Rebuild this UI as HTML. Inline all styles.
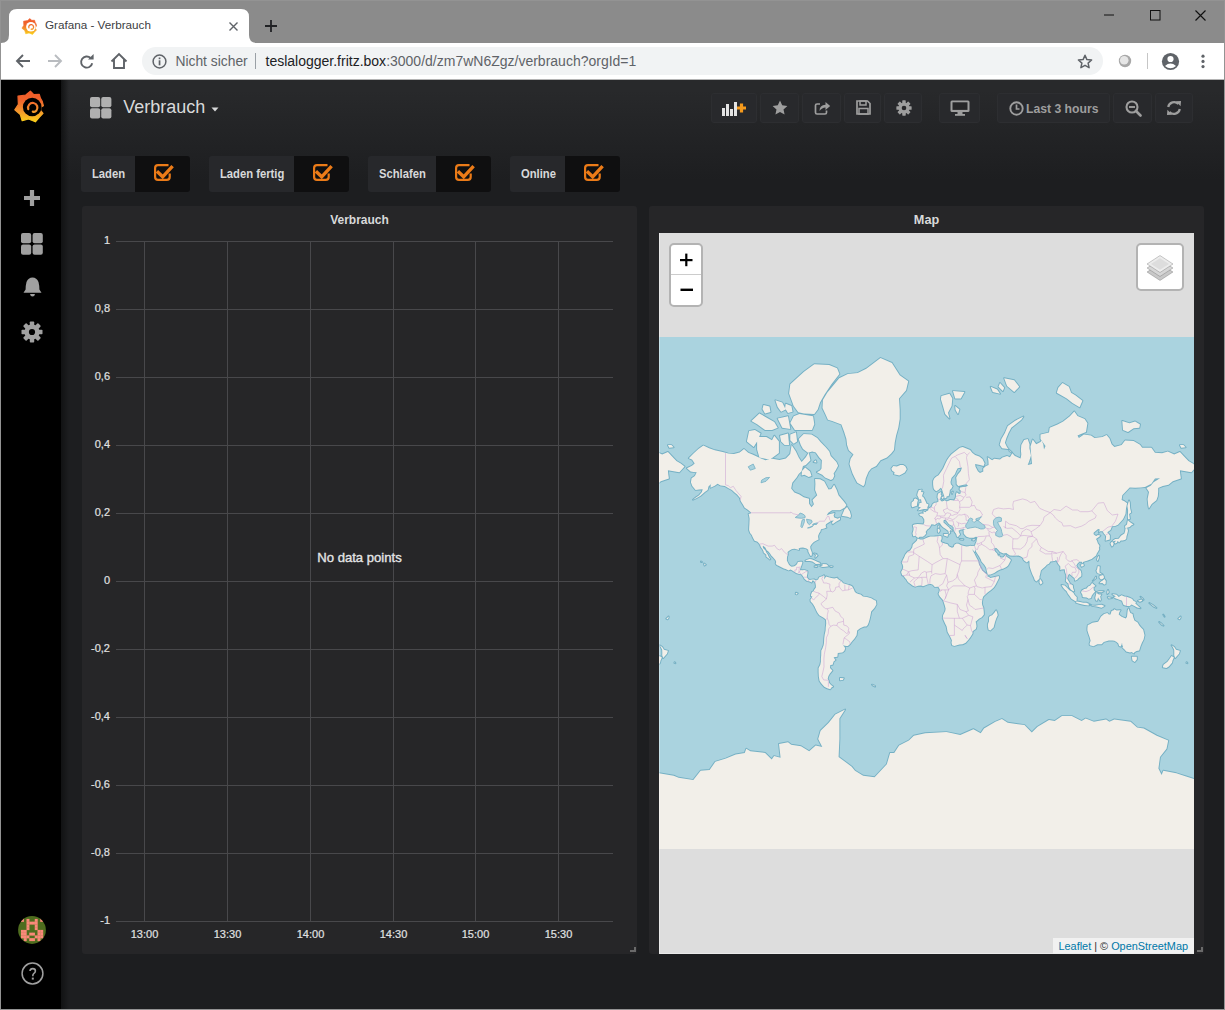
<!DOCTYPE html>
<html><head><meta charset="utf-8">
<style>
*{box-sizing:border-box}
html,body{margin:0;padding:0;width:1225px;height:1010px;overflow:hidden;background:#939393;font-family:"Liberation Sans",sans-serif}
.a{position:absolute}
.t{position:absolute;white-space:nowrap;line-height:1}
#tabstrip{left:1px;top:1px;width:1223px;height:42px;background:#8b8b8b}
#toolbar{left:1px;top:43px;width:1223px;height:37px;background:#fff}
#content{left:1px;top:80px;width:1223px;height:929px;background:linear-gradient(180deg,#28292b 10px,#1d1e20 100px);overflow:hidden}
#side{left:0;top:0;width:60px;height:929px;background:#000}
#sideshadow{left:60px;top:0;width:8px;height:929px;background:linear-gradient(to right,#111213,rgba(29,30,32,0))}
.btn{position:absolute;top:13px;height:30px;background:#28292c;border-radius:3px;border:1px solid #2d2e31}
.lbl{position:absolute;top:76px;height:35.6px;background:#27282b;border-radius:3px 0 0 3px;color:#d8d9da;font-weight:bold;font-size:13px}
.sx{transform:scaleX(0.865);transform-origin:0 0}
.chk{position:absolute;top:76px;height:35.6px;background:#0f0f10;border-radius:0 3px 3px 0}
.panel{position:absolute;top:126px;height:748px;background:#262628;border-radius:3px}
.yl{position:absolute;right:0;width:40px;text-align:right;font-size:11px;color:#d8d9da;line-height:1}
.xl{position:absolute;width:40px;text-align:center;font-size:11px;color:#d8d9da;line-height:1;top:728px}
</style></head><body>
<div id="tabstrip" class="a">
  <svg class="a" style="left:-1px;top:-1px" width="270" height="43">
    <path d="M1,43 Q9,43 9,35 L9,17 Q9,9 17,9 L241,9 Q249,9 249,17 L249,35 Q249,43 257,43 Z" fill="#fff"/>
  </svg>
  <svg class="a" style="left:19.5px;top:16.5px" width="17" height="17" viewBox="4 4 31 33">
    <defs><linearGradient id="gfav" x1="0" y1="5" x2="0" y2="36" gradientUnits="userSpaceOnUse"><stop offset="0" stop-color="#f05a28"/><stop offset="0.35" stop-color="#f0642c"/><stop offset="0.65" stop-color="#f4962c"/><stop offset="1" stop-color="#fbd019"/></linearGradient></defs>
    <path d="M20.4,5.1 L23.8,8.6 L29.3,8.3 L30.4,12.2 Q33,15.5 33.4,19.8 L30.8,21.2 L30.6,24.3 L33,27.4 L29.2,31.4 L25.4,35.8 L18.6,33 L12.2,34.7 L10.3,28.5 L4.8,23.8 L8.4,18.2 L8,10.2 L15.8,9 Z" fill="url(#gfav)" stroke="url(#gfav)" stroke-width="1.2" stroke-linejoin="round"/>
    <circle cx="22.2" cy="21" r="9.3" fill="#fff"/>
    <path d="M18.3,23.2 A4.7,4.7 0 1 1 26.4,24.6 Q25,26.3 22.8,25.6" fill="none" stroke="url(#gfav)" stroke-width="2.6" stroke-linecap="round"/>
  </svg>
  <div class="t" style="left:44px;top:18px;font-size:11.7px;color:#3c4043">Grafana - Verbrauch</div>
  <svg class="a" style="left:228px;top:21px" width="9" height="9"><path d="M0.5,0.5 L8.5,8.5 M8.5,0.5 L0.5,8.5" stroke="#5f6368" stroke-width="1.4"/></svg>
  <svg class="a" style="left:264px;top:19px" width="12" height="12"><path d="M6,0 V12 M0,6 H12" stroke="#202124" stroke-width="1.8"/></svg>
  <svg class="a" style="left:1103px;top:13px" width="11" height="2"><path d="M0,1 H10" stroke="#111" stroke-width="1"/></svg>
  <svg class="a" style="left:1149px;top:9px" width="11" height="11"><rect x="0.5" y="0.5" width="9.5" height="9.5" fill="none" stroke="#111" stroke-width="1"/></svg>
  <svg class="a" style="left:1194px;top:9px" width="11" height="11"><path d="M0.5,0.5 L10.5,10.5 M10.5,0.5 L0.5,10.5" stroke="#111" stroke-width="1.15"/></svg>
</div>
<div id="toolbar" class="a">
  <div class="a" style="left:0;top:36px;width:1223px;height:1px;background:#b4b4b4"></div>
  <!-- back -->
  <svg class="a" style="left:14.3px;top:10px" width="16" height="16" viewBox="0 0 16 16"><path d="M15,8 H2.5 M8,2 L2,8 L8,14" fill="none" stroke="#5f6368" stroke-width="1.9"/></svg>
  <svg class="a" style="left:46.2px;top:10px" width="16" height="16" viewBox="0 0 16 16"><path d="M1,8 H13.5 M8,2 L14,8 L8,14" fill="none" stroke="#b9bcc0" stroke-width="1.9"/></svg>
  <svg class="a" style="left:78px;top:10.6px" width="16" height="16" viewBox="0 0 16 16"><path d="M13.2,9.2 A5.6,5.6 0 1 1 11.6,4" fill="none" stroke="#5f6368" stroke-width="1.9"/><path d="M9,5.6 L14.6,5.6 L14.6,0 Z" fill="#5f6368"/></svg>
  <svg class="a" style="left:109px;top:9px" width="18" height="18" viewBox="0 0 18 18"><path d="M1.5,9.5 L9,2 L16.5,9.5 M4,7.5 V16 H14 V7.5" fill="none" stroke="#5f6368" stroke-width="1.9" stroke-linejoin="miter"/></svg>
  <div class="a" style="left:141px;top:4px;width:961px;height:28px;border-radius:14px;background:#f1f3f4"></div>
  <svg class="a" style="left:150.7px;top:10.6px" width="15" height="15" viewBox="0 0 15 15"><circle cx="7.5" cy="7.5" r="6.4" fill="none" stroke="#5f6368" stroke-width="1.5"/><rect x="6.7" y="6.3" width="1.7" height="5" fill="#5f6368"/><rect x="6.7" y="3.5" width="1.7" height="1.7" fill="#5f6368"/></svg>
  <div class="t" style="left:174.4px;top:12px;font-size:13.85px;color:#5f6368">Nicht sicher</div>
  <div class="a" style="left:254.4px;top:10px;width:1px;height:16px;background:#9aa0a6"></div>
  <div class="t" style="left:264.5px;top:10.6px;font-size:14px;color:#202124">teslalogger.fritz.box<span style="color:#5f6368">:3000/d/zm7wN6Zgz/verbrauch?orgId=1</span></div>
  <svg class="a" style="left:1076.3px;top:10.5px" width="16" height="16" viewBox="0 0 16 16"><path d="M8,1.3 L9.9,5.6 L14.6,6 L11.1,9.1 L12.1,13.7 L8,11.3 L3.9,13.7 L4.9,9.1 L1.4,6 L6.1,5.6 Z" fill="none" stroke="#5f6368" stroke-width="1.5" stroke-linejoin="round"/></svg>
  <svg class="a" style="left:1117px;top:11px" width="14" height="14" viewBox="0 0 14 14"><circle cx="7" cy="7" r="6.2" fill="#a8a8a8"/><circle cx="6.2" cy="6.2" r="4.3" fill="#e6e6e6"/></svg>
  <div class="a" style="left:1146px;top:10px;width:1px;height:16px;background:#c6c6c6"></div>
  <svg class="a" style="left:1159.5px;top:8.5px" width="19" height="19" viewBox="0 0 19 19"><circle cx="9.5" cy="9.5" r="8.6" fill="#5f6368"/><circle cx="9.5" cy="7" r="3.1" fill="#fff"/><path d="M4,14 Q9.5,9.2 15,14 Q9.5,18.5 4,14 Z" fill="#fff"/></svg>
  <svg class="a" style="left:1198.6px;top:11px" width="6" height="15" viewBox="0 0 6 15"><circle cx="3" cy="2.2" r="1.6" fill="#5f6368"/><circle cx="3" cy="7.4" r="1.6" fill="#5f6368"/><circle cx="3" cy="12.6" r="1.6" fill="#5f6368"/></svg>
</div>
<div id="content" class="a">
  <div id="sideshadow" class="a"></div>
  <div id="side" class="a">
    <svg class="a" style="left:9px;top:6px" width="40" height="40" viewBox="0 0 40 40">
      <defs><linearGradient id="glogo" x1="0" y1="5" x2="0" y2="36" gradientUnits="userSpaceOnUse"><stop offset="0" stop-color="#f05a28"/><stop offset="0.3" stop-color="#f0642c"/><stop offset="0.65" stop-color="#f4962c"/><stop offset="1" stop-color="#fbd019"/></linearGradient></defs>
      <path d="M20.4,5.1 L23.8,8.6 L29.3,8.3 L30.4,12.2 Q33,15.5 33.4,19.8 L30.8,21.2 L30.6,24.3 L33,27.4 L29.2,31.4 L25.4,35.8 L18.6,33 L12.2,34.7 L10.3,28.5 L4.8,23.8 L8.4,18.2 L8,10.2 L15.8,9 Z" fill="url(#glogo)" stroke="url(#glogo)" stroke-width="1.2" stroke-linejoin="round"/>
      <circle cx="22.2" cy="21" r="9.3" fill="#000"/>
      <path d="M18.3,23.2 A4.7,4.7 0 1 1 26.4,24.6 Q25,26.3 22.8,25.6" fill="none" stroke="url(#glogo)" stroke-width="2.2" stroke-linecap="round"/>
    </svg>
    <svg class="a" style="left:22px;top:109px" width="18" height="18" viewBox="0 0 18 18"><path d="M9,1 V17 M1,9 H17" stroke="#a0a0a0" stroke-width="4.2"/></svg>
    <svg class="a" style="left:20.2px;top:153px" width="22" height="22" viewBox="0 0 22 22"><rect x="0" y="0" width="10.2" height="10.2" rx="2" fill="#a0a0a0"/><rect x="11.6" y="0" width="10.2" height="10.2" rx="2" fill="#a0a0a0"/><rect x="0" y="11.6" width="10.2" height="10.2" rx="2" fill="#a0a0a0"/><rect x="11.6" y="11.6" width="10.2" height="10.2" rx="2" fill="#a0a0a0"/></svg>
    <svg class="a" style="left:22px;top:197px" width="19" height="21" viewBox="0 0 19 21"><path d="M9.5,0.5 Q13.7,0.5 15.5,5 Q16.5,9 16.4,12.5 L18.5,15.8 H0.5 L2.6,12.5 Q2.5,9 3.5,5 Q5.3,0.5 9.5,0.5 Z" fill="#a0a0a0"/><path d="M7,17 H12 Q11.6,19.6 9.5,19.6 Q7.4,19.6 7,17 Z" fill="#a0a0a0"/></svg>
    <svg class="a" style="left:20.3px;top:240.8px" width="22" height="22" viewBox="0 0 22 22"><g fill="#a0a0a0"><circle cx="11" cy="11" r="7.6"/><rect x="8.8" y="0.5" width="4.4" height="21" rx="0.8"/><rect x="8.8" y="0.5" width="4.4" height="21" rx="0.8" transform="rotate(45 11 11)"/><rect x="8.8" y="0.5" width="4.4" height="21" rx="0.8" transform="rotate(90 11 11)"/><rect x="8.8" y="0.5" width="4.4" height="21" rx="0.8" transform="rotate(135 11 11)"/></g><circle cx="11" cy="11" r="3.1" fill="#000"/></svg>
    <svg class="a" style="left:17px;top:836px" width="28" height="28" viewBox="0 0 28 28"><defs><clipPath id="avc"><circle cx="14" cy="14" r="13.9"/></clipPath></defs><g clip-path="url(#avc)"><rect width="28" height="28" fill="#4e6c1e"/><g fill="#f98979"><rect x="3.00" y="2.90" width="2.95" height="2.95"/><rect x="8.50" y="2.90" width="2.95" height="2.95"/><rect x="16.75" y="2.90" width="2.95" height="2.95"/><rect x="22.25" y="2.90" width="2.95" height="2.95"/><rect x="8.50" y="5.65" width="2.95" height="2.95"/><rect x="11.25" y="5.65" width="2.95" height="2.95"/><rect x="14.00" y="5.65" width="2.95" height="2.95"/><rect x="16.75" y="5.65" width="2.95" height="2.95"/><rect x="8.50" y="8.40" width="2.95" height="2.95"/><rect x="16.75" y="8.40" width="2.95" height="2.95"/><rect x="8.50" y="11.15" width="2.95" height="2.95"/><rect x="16.75" y="11.15" width="2.95" height="2.95"/><rect x="3.00" y="13.90" width="2.95" height="2.95"/><rect x="5.75" y="13.90" width="2.95" height="2.95"/><rect x="19.50" y="13.90" width="2.95" height="2.95"/><rect x="22.25" y="13.90" width="2.95" height="2.95"/><rect x="3.00" y="16.65" width="2.95" height="2.95"/><rect x="5.75" y="16.65" width="2.95" height="2.95"/><rect x="11.25" y="16.65" width="2.95" height="2.95"/><rect x="14.00" y="16.65" width="2.95" height="2.95"/><rect x="19.50" y="16.65" width="2.95" height="2.95"/><rect x="22.25" y="16.65" width="2.95" height="2.95"/><rect x="3.00" y="19.40" width="2.95" height="2.95"/><rect x="5.75" y="19.40" width="2.95" height="2.95"/><rect x="8.50" y="19.40" width="2.95" height="2.95"/><rect x="16.75" y="19.40" width="2.95" height="2.95"/><rect x="19.50" y="19.40" width="2.95" height="2.95"/><rect x="22.25" y="19.40" width="2.95" height="2.95"/><rect x="5.75" y="22.15" width="2.95" height="2.95"/><rect x="11.25" y="22.15" width="2.95" height="2.95"/><rect x="14.00" y="22.15" width="2.95" height="2.95"/><rect x="19.50" y="22.15" width="2.95" height="2.95"/></g></g></svg>
    <svg class="a" style="left:19.6px;top:882.4px" width="23" height="23" viewBox="0 0 23 23"><circle cx="11.5" cy="11.5" r="10.4" fill="none" stroke="#a0a0a0" stroke-width="1.5"/><path d="M9,9 Q9.2,6.6 11.8,6.6 Q14.4,6.6 14.4,9 Q14.4,10.6 12.7,11.6 Q11.8,12.2 11.8,14.2" fill="none" stroke="#a0a0a0" stroke-width="1.6"/><rect x="10.8" y="15.6" width="2" height="2" fill="#a0a0a0"/></svg>
  </div>
  <!-- header -->
  <svg class="a" style="left:89px;top:17px" width="22" height="22" viewBox="0 0 22 22"><rect x="0" y="0" width="10.2" height="10.2" rx="2" fill="#b0b0b0"/><rect x="11.2" y="0" width="10.2" height="10.2" rx="2" fill="#b0b0b0"/><rect x="0" y="11.2" width="10.2" height="10.2" rx="2" fill="#b0b0b0"/><rect x="11.2" y="11.2" width="10.2" height="10.2" rx="2" fill="#b0b0b0"/></svg>
  <div class="t" style="left:122.3px;top:17.7px;font-size:18px;color:#d8d9da">Verbrauch</div>
  <svg class="a" style="left:210px;top:26.7px" width="8" height="5"><path d="M0.5,0.5 H7.5 L4,4.5 Z" fill="#d8d9da"/></svg>

  <div class="btn" style="left:710px;width:46px"></div>
  <div class="btn" style="left:759px;width:39px"></div>
  <div class="btn" style="left:801px;width:39px"></div>
  <div class="btn" style="left:843px;width:37px"></div>
  <div class="btn" style="left:883px;width:38px"></div>
  <div class="btn" style="left:938px;width:41px"></div>
  <div class="btn" style="left:996px;width:113px"></div>
  <div class="btn" style="left:1112px;width:39px"></div>
  <div class="btn" style="left:1154px;width:38px"></div>
  <!-- add panel icon -->
  <svg class="a" style="left:721px;top:20px" width="26" height="16" viewBox="0 0 26 16"><g fill="#e3e3e3"><rect x="0" y="8" width="3" height="8"/><rect x="4" y="4" width="3" height="12"/><rect x="8" y="9" width="3" height="7"/><rect x="12" y="2" width="3" height="14"/></g><path d="M15,8 H24 M19.5,3.5 V12.5" stroke="#f59a1c" stroke-width="3.2"/></svg>
  <svg class="a" style="left:771px;top:20px" width="16" height="16" viewBox="0 0 16 16"><path d="M8,0.5 L10.2,5.3 L15.4,5.9 L11.5,9.4 L12.6,14.6 L8,12 L3.4,14.6 L4.5,9.4 L0.6,5.9 L5.8,5.3 Z" fill="#9e9e9e"/></svg>
  <svg class="a" style="left:813px;top:19px" width="17" height="16" viewBox="0 0 17 16"><path d="M6,5 H3 Q1.5,5 1.5,6.5 V13.5 Q1.5,15 3,15 H11 Q12.5,15 12.5,13.5 V11.5" fill="none" stroke="#9e9e9e" stroke-width="1.7"/><path d="M5.5,12 Q5.5,6 11.5,5.8 V3 L16.2,7 L11.5,11 V8.5 Q8,8.5 5.5,12 Z" fill="#9e9e9e"/></svg>
  <svg class="a" style="left:855px;top:20px" width="15" height="15" viewBox="0 0 15 15"><path d="M1,1 H11.5 L14,3.5 V14 H1 Z" fill="none" stroke="#9e9e9e" stroke-width="1.7"/><rect x="4" y="1" width="6" height="4" fill="none" stroke="#9e9e9e" stroke-width="1.5"/><rect x="3" y="8.5" width="9" height="5.5" fill="none" stroke="#9e9e9e" stroke-width="1.5"/></svg>
  <svg class="a" style="left:895px;top:20px" width="16" height="16" viewBox="0 0 22 22"><g fill="#9e9e9e"><circle cx="11" cy="11" r="7.6"/><rect x="8.6" y="0.5" width="4.8" height="21" rx="0.8"/><rect x="8.6" y="0.5" width="4.8" height="21" rx="0.8" transform="rotate(45 11 11)"/><rect x="8.6" y="0.5" width="4.8" height="21" rx="0.8" transform="rotate(90 11 11)"/><rect x="8.6" y="0.5" width="4.8" height="21" rx="0.8" transform="rotate(135 11 11)"/></g><circle cx="11" cy="11" r="3.2" fill="#262628"/></svg>
  <svg class="a" style="left:949px;top:20px" width="20" height="16" viewBox="0 0 20 16"><rect x="0.5" y="0.5" width="19" height="11.5" rx="1.5" fill="#9e9e9e"/><rect x="2.5" y="2.3" width="15" height="7.6" fill="#262628"/><rect x="7.5" y="12" width="5" height="2.4" fill="#9e9e9e"/><rect x="5" y="14" width="10" height="1.8" fill="#9e9e9e"/></svg>
  <svg class="a" style="left:1008px;top:21px" width="15" height="15" viewBox="0 0 15 15"><circle cx="7.5" cy="7.5" r="6.2" fill="none" stroke="#9e9e9e" stroke-width="1.9"/><path d="M7.5,3.5 V8 H10.5" fill="none" stroke="#9e9e9e" stroke-width="1.7"/></svg>
  <div class="t" style="left:1025px;top:22.8px;font-size:12.2px;color:#9e9e9e;font-weight:bold">Last 3 hours</div>
  <svg class="a" style="left:1124px;top:20px" width="17" height="17" viewBox="0 0 17 17"><circle cx="7" cy="7" r="5.5" fill="none" stroke="#9e9e9e" stroke-width="2.1"/><path d="M4,7 H10" stroke="#9e9e9e" stroke-width="1.9"/><path d="M11,11 L15.5,15.5" stroke="#9e9e9e" stroke-width="2.6" stroke-linecap="round"/></svg>
  <svg class="a" style="left:1165px;top:20px" width="16" height="16" viewBox="0 0 16 16"><path d="M2.2,7 A6,6 0 0 1 12.5,4" fill="none" stroke="#9e9e9e" stroke-width="2.2"/><path d="M10,1.2 L15,1 L14.6,6.2 Z" fill="#9e9e9e"/><path d="M13.8,9 A6,6 0 0 1 3.5,12" fill="none" stroke="#9e9e9e" stroke-width="2.2"/><path d="M6,14.8 L1,15 L1.4,9.8 Z" fill="#9e9e9e"/></svg>

  <!-- variables -->
  <div class="lbl" style="left:80px;width:54px"><span class="t sx" style="left:11px;top:10.8px">Laden</span></div>
  <div class="chk" style="left:134px;width:55px"></div>
  <div class="lbl" style="left:208px;width:86px"><span class="t sx" style="left:11px;top:10.8px">Laden fertig</span></div>
  <div class="chk" style="left:293px;width:55px"></div>
  <div class="lbl" style="left:367px;width:69px"><span class="t sx" style="left:11.2px;top:10.8px">Schlafen</span></div>
  <div class="chk" style="left:435px;width:55px"></div>
  <div class="lbl" style="left:509px;width:56px"><span class="t sx" style="left:10.8px;top:10.8px">Online</span></div>
  <div class="chk" style="left:564px;width:55px"></div>
  <svg class="a" style="left:151.5px;top:82px" width="22" height="20" viewBox="-1 -2 22 20"><path d="M14.5,1.1 H4 Q1.1,1.1 1.1,4 V12.9 Q1.1,15.8 4,15.8 H12.8 Q15.7,15.8 15.7,12.9 V9.5" fill="none" stroke="#eb7b18" stroke-width="2.2"/><path d="M2.9,7.3 L8.7,12.8 L18.6,2.2" fill="none" stroke="#eb7b18" stroke-width="3.4"/></svg>
<svg class="a" style="left:310.5px;top:82px" width="22" height="20" viewBox="-1 -2 22 20"><path d="M14.5,1.1 H4 Q1.1,1.1 1.1,4 V12.9 Q1.1,15.8 4,15.8 H12.8 Q15.7,15.8 15.7,12.9 V9.5" fill="none" stroke="#eb7b18" stroke-width="2.2"/><path d="M2.9,7.3 L8.7,12.8 L18.6,2.2" fill="none" stroke="#eb7b18" stroke-width="3.4"/></svg>
<svg class="a" style="left:452.5px;top:82px" width="22" height="20" viewBox="-1 -2 22 20"><path d="M14.5,1.1 H4 Q1.1,1.1 1.1,4 V12.9 Q1.1,15.8 4,15.8 H12.8 Q15.7,15.8 15.7,12.9 V9.5" fill="none" stroke="#eb7b18" stroke-width="2.2"/><path d="M2.9,7.3 L8.7,12.8 L18.6,2.2" fill="none" stroke="#eb7b18" stroke-width="3.4"/></svg>
<svg class="a" style="left:581.5px;top:82px" width="22" height="20" viewBox="-1 -2 22 20"><path d="M14.5,1.1 H4 Q1.1,1.1 1.1,4 V12.9 Q1.1,15.8 4,15.8 H12.8 Q15.7,15.8 15.7,12.9 V9.5" fill="none" stroke="#eb7b18" stroke-width="2.2"/><path d="M2.9,7.3 L8.7,12.8 L18.6,2.2" fill="none" stroke="#eb7b18" stroke-width="3.4"/></svg>

  <!-- chart panel -->
  <div class="panel" style="left:81px;width:555px">
    <div class="t" style="left:0;width:555px;text-align:center;top:7.6px;font-size:12px;font-weight:bold;color:#d8d9da">Verbrauch</div>
    <svg class="a" style="left:0;top:0" width="555" height="748">
<path d="M34,35.5 H531" stroke="#48484b" stroke-width="1"/>
<path d="M34,103.5 H531" stroke="#48484b" stroke-width="1"/>
<path d="M34,171.5 H531" stroke="#48484b" stroke-width="1"/>
<path d="M34,239.5 H531" stroke="#48484b" stroke-width="1"/>
<path d="M34,307.5 H531" stroke="#48484b" stroke-width="1"/>
<path d="M34,375.5 H531" stroke="#48484b" stroke-width="1"/>
<path d="M34,443.5 H531" stroke="#48484b" stroke-width="1"/>
<path d="M34,511.5 H531" stroke="#48484b" stroke-width="1"/>
<path d="M34,579.5 H531" stroke="#48484b" stroke-width="1"/>
<path d="M34,647.5 H531" stroke="#48484b" stroke-width="1"/>
<path d="M34,715.5 H531" stroke="#48484b" stroke-width="1"/>
<path d="M62.5,35 V715" stroke="#48484b" stroke-width="1"/>
<path d="M145.5,35 V715" stroke="#48484b" stroke-width="1"/>
<path d="M228.5,35 V715" stroke="#48484b" stroke-width="1"/>
<path d="M311.5,35 V715" stroke="#48484b" stroke-width="1"/>
<path d="M393.5,35 V715" stroke="#48484b" stroke-width="1"/>
<path d="M476.5,35 V715" stroke="#48484b" stroke-width="1"/>
<path d="M548,745 H553 V741" fill="none" stroke="#6a6a6a" stroke-width="2"/>
</svg>
<div class="t" style="left:-12px;width:40px;text-align:right;top:29.0px;font-size:11px;color:#e0e1e2;-webkit-text-stroke:0.2px #e0e1e2">1</div>
<div class="t" style="left:-12px;width:40px;text-align:right;top:97.0px;font-size:11px;color:#e0e1e2;-webkit-text-stroke:0.2px #e0e1e2">0,8</div>
<div class="t" style="left:-12px;width:40px;text-align:right;top:165.0px;font-size:11px;color:#e0e1e2;-webkit-text-stroke:0.2px #e0e1e2">0,6</div>
<div class="t" style="left:-12px;width:40px;text-align:right;top:233.0px;font-size:11px;color:#e0e1e2;-webkit-text-stroke:0.2px #e0e1e2">0,4</div>
<div class="t" style="left:-12px;width:40px;text-align:right;top:301.0px;font-size:11px;color:#e0e1e2;-webkit-text-stroke:0.2px #e0e1e2">0,2</div>
<div class="t" style="left:-12px;width:40px;text-align:right;top:369.0px;font-size:11px;color:#e0e1e2;-webkit-text-stroke:0.2px #e0e1e2">0</div>
<div class="t" style="left:-12px;width:40px;text-align:right;top:437.0px;font-size:11px;color:#e0e1e2;-webkit-text-stroke:0.2px #e0e1e2">-0,2</div>
<div class="t" style="left:-12px;width:40px;text-align:right;top:505.0px;font-size:11px;color:#e0e1e2;-webkit-text-stroke:0.2px #e0e1e2">-0,4</div>
<div class="t" style="left:-12px;width:40px;text-align:right;top:573.0px;font-size:11px;color:#e0e1e2;-webkit-text-stroke:0.2px #e0e1e2">-0,6</div>
<div class="t" style="left:-12px;width:40px;text-align:right;top:641.0px;font-size:11px;color:#e0e1e2;-webkit-text-stroke:0.2px #e0e1e2">-0,8</div>
<div class="t" style="left:-12px;width:40px;text-align:right;top:709.0px;font-size:11px;color:#e0e1e2;-webkit-text-stroke:0.2px #e0e1e2">-1</div>
<div class="t" style="left:37.5px;width:50px;text-align:center;top:722.8px;font-size:11px;color:#e0e1e2;-webkit-text-stroke:0.2px #e0e1e2">13:00</div>
<div class="t" style="left:120.5px;width:50px;text-align:center;top:722.8px;font-size:11px;color:#e0e1e2;-webkit-text-stroke:0.2px #e0e1e2">13:30</div>
<div class="t" style="left:203.5px;width:50px;text-align:center;top:722.8px;font-size:11px;color:#e0e1e2;-webkit-text-stroke:0.2px #e0e1e2">14:00</div>
<div class="t" style="left:286.5px;width:50px;text-align:center;top:722.8px;font-size:11px;color:#e0e1e2;-webkit-text-stroke:0.2px #e0e1e2">14:30</div>
<div class="t" style="left:368.5px;width:50px;text-align:center;top:722.8px;font-size:11px;color:#e0e1e2;-webkit-text-stroke:0.2px #e0e1e2">15:00</div>
<div class="t" style="left:451.5px;width:50px;text-align:center;top:722.8px;font-size:11px;color:#e0e1e2;-webkit-text-stroke:0.2px #e0e1e2">15:30</div>
<div class="t" style="left:0;width:555px;text-align:center;top:345.2px;font-size:13.1px;color:#e4e5e6;-webkit-text-stroke:0.35px #e4e5e6">No data points</div>
  </div>
  <!-- map panel -->
  <div class="panel" style="left:648px;width:555px">
    <div class="t" style="left:0;width:555px;text-align:center;top:8.3px;font-size:12.7px;font-weight:bold;color:#d8d9da">Map</div>
    <svg class="a" style="left:0;top:0" width="555" height="748"><path d="M548,745 H553 V741" fill="none" stroke="#6a6a6a" stroke-width="2"/></svg>
  </div>
  <svg class="a" style="left:658px;top:153px" width="535" height="721" viewBox="659 233 535 721">
<defs><clipPath id="mc"><rect x="659" y="233" width="535" height="721"/></clipPath>
<path id="land" d="M686.9,468.2 692.0,465.8 694.7,463.6 692.0,459.5 688.8,458.2 693.5,453.6 698.4,449.1 703.4,445.6 709.1,448.2 714.8,450.3 722.6,452.0 728.3,453.6 734.0,454.0 739.7,452.4 744.0,449.1 748.2,452.8 752.5,454.4 761.0,458.4 765.3,460.3 772.4,458.8 779.5,459.9 785.9,458.4 790.2,454.0 791.6,445.1 795.9,451.6 798.7,457.6 801.6,462.1 805.8,457.2 808.7,452.4 810.5,460.3 805.8,465.0 803.0,466.1 801.6,471.2 798.7,473.9 796.6,477.4 792.3,482.8 791.2,488.5 794.4,492.5 799.4,494.4 803.7,497.2 809.0,498.7 809.1,503.8 811.5,507.3 813.9,504.3 812.5,499.9 817.2,495.2 815.1,489.9 815.4,484.0 815.1,478.9 820.0,479.2 824.3,481.6 827.2,487.1 828.6,489.6 831.4,489.0 834.1,484.8 836.7,489.9 838.5,495.2 841.0,498.2 843.8,501.4 846.4,505.0 844.9,507.5 840.0,510.2 832.1,510.2 828.3,512.8 826.6,515.4 830.0,513.9 834.6,513.0 833.6,515.4 834.3,517.5 837.8,518.7 840.0,517.5 840.0,519.6 835.7,522.0 832.6,524.2 832.0,522.2 833.8,520.6 831.4,520.8 828.6,522.6 826.0,524.2 825.6,525.9 826.4,527.6 824.3,528.4 821.0,529.2 820.8,529.9 820.2,531.9 819.2,533.0 818.1,535.9 818.2,537.5 818.6,539.5 816.5,540.5 813.8,542.0 811.8,543.9 810.2,546.4 810.4,548.4 811.9,552.8 811.8,555.5 810.7,556.1 809.5,553.9 808.4,551.8 808.2,549.7 806.5,548.4 803.0,547.6 800.4,547.7 798.7,548.2 799.1,549.9 797.3,549.4 794.7,548.7 792.3,548.9 791.2,549.4 788.8,551.0 787.6,552.1 787.8,554.8 787.0,557.0 786.9,560.5 787.6,562.1 789.0,564.7 790.3,566.1 791.7,566.7 794.4,566.2 796.3,564.9 797.3,563.5 797.9,562.1 800.1,561.7 802.1,561.8 802.4,562.7 801.6,564.9 801.0,566.7 800.4,568.0 800.0,570.1 802.3,570.2 804.4,570.1 807.4,571.1 807.5,572.9 807.1,575.1 806.8,577.1 808.1,579.0 809.7,580.0 812.2,579.6 814.1,579.4 815.9,580.6 816.2,581.7 815.2,582.7 814.5,581.6 812.9,580.3 812.1,581.0 811.7,582.6 810.8,581.9 809.0,581.3 807.0,580.9 804.4,578.8 803.8,577.4 802.6,575.7 801.4,574.2 799.0,573.9 796.2,573.0 794.6,571.9 792.3,570.4 790.5,569.6 788.6,570.4 785.6,569.1 783.9,568.6 780.9,567.1 778.5,565.8 776.7,565.0 775.7,563.4 776.2,562.0 775.4,560.0 774.5,558.9 773.0,557.2 771.3,555.6 770.4,553.9 768.7,551.8 766.7,550.2 765.3,547.6 763.2,545.8 762.7,546.6 763.2,548.2 765.3,550.2 766.3,552.5 767.7,554.5 769.0,557.4 770.3,559.1 769.7,559.5 768.8,558.4 766.4,556.7 766.3,554.7 763.7,552.6 763.6,551.5 762.7,549.4 761.0,547.3 760.2,545.3 759.3,543.7 757.8,542.0 757.0,541.5 754.6,540.8 753.5,538.8 752.6,537.0 751.8,534.9 750.1,532.9 749.1,530.1 749.2,527.1 749.4,523.8 749.6,518.7 749.1,515.8 748.6,514.1 751.1,513.3 750.8,512.2 747.5,509.5 744.7,507.7 743.2,505.0 740.7,500.9 739.8,497.7 737.1,494.6 734.6,492.5 731.9,489.9 729.0,488.5 724.8,486.0 720.5,485.4 717.6,483.7 714.8,485.7 710.5,487.7 710.8,484.3 712.7,482.2 708.5,486.5 707.7,489.9 704.8,492.0 700.6,495.7 696.3,498.2 693.0,499.7 695.2,497.9 699.2,495.2 701.9,492.0 702.7,489.3 699.2,489.6 695.6,489.9 692.3,486.0 690.9,482.2 691.6,478.3 694.9,476.1 696.7,472.2 693.5,471.9 690.6,471.6 686.9,468.2Z M811.5,434.6 817.2,438.1 820.5,441.9 825.7,447.3 829.3,451.6 830.7,456.0 836.4,462.1 838.1,465.8 835.7,470.2 833.6,473.5 834.3,475.8 832.8,478.9 830.9,480.1 825.0,477.4 822.2,474.8 816.9,472.2 820.0,470.6 821.5,468.5 821.6,465.0 821.9,460.3 819.3,457.6 815.8,452.4 812.2,451.6 808.0,452.8 803.0,449.1 800.8,445.1 798.7,439.1 803.7,434.1 811.5,434.6Z M805.1,467.5 810.1,471.6 811.5,476.1 808.7,477.0 804.4,474.8 801.6,475.5 802.0,470.9 805.1,467.5Z M815.8,460.3 816.5,462.5 813.6,462.1 815.8,460.3Z M847.1,507.0 849.9,511.5 851.0,515.8 850.3,517.9 847.5,516.7 841.7,515.8 843.1,512.8 844.4,509.5 847.1,507.0Z M880.5,358.0 891.9,362.9 899.7,375.2 908.2,381.2 906.1,390.3 899.0,398.5 899.7,409.4 899.7,419.1 898.3,427.8 896.1,435.6 894.7,442.8 894.0,449.9 891.2,453.6 886.9,457.6 880.5,460.3 876.2,466.1 871.2,468.5 868.4,471.9 865.8,478.3 864.6,484.3 863.4,486.3 859.9,484.3 857.3,482.8 854.9,478.3 852.6,473.5 850.9,468.5 849.5,464.0 850.6,458.8 853.5,454.4 848.8,450.3 847.1,445.1 846.4,439.1 844.2,432.1 841.4,424.4 832.1,420.9 827.9,419.7 825.7,414.7 822.5,408.0 822.9,400.0 827.2,392.8 832.8,385.9 839.2,378.2 847.8,374.1 857.7,373.1 866.3,368.7 880.5,358.0Z M903.2,465.0 905.4,466.5 906.7,469.2 904.8,472.6 901.8,474.2 899.3,475.5 893.9,474.2 894.7,472.6 892.0,470.6 891.4,468.5 893.3,466.1 896.8,466.5 900.4,465.0 903.2,465.0Z M815.9,580.6 818.2,579.6 819.0,577.5 820.5,576.8 822.9,576.1 824.0,575.2 824.6,576.5 824.2,578.0 824.0,579.6 825.0,578.1 826.2,576.4 828.6,577.3 831.4,578.0 834.3,578.4 837.4,577.7 837.5,578.7 839.5,580.1 841.4,581.3 843.2,583.3 847.4,584.6 849.2,585.0 851.6,586.0 852.6,587.0 854.2,590.2 854.9,591.9 856.6,593.3 858.4,594.0 860.6,594.6 863.0,596.6 867.0,597.1 871.2,598.3 874.1,600.1 875.9,600.8 876.4,604.4 874.4,608.0 871.2,611.6 870.5,615.3 869.7,619.0 868.7,622.5 867.7,625.1 866.3,626.6 864.1,626.6 860.2,628.2 857.2,630.5 856.6,635.3 854.5,638.6 851.9,641.4 850.1,644.0 847.9,646.0 846.1,646.0 842.9,645.2 844.6,647.1 845.2,648.5 844.2,651.1 842.4,652.4 837.8,653.1 837.4,656.7 833.6,657.2 834.6,658.9 835.5,660.1 833.6,661.5 832.6,664.8 830.3,665.0 830.0,667.9 832.4,670.6 829.9,673.6 828.4,676.0 827.7,678.7 828.7,680.8 829.1,682.9 831.3,685.3 833.1,686.6 831.4,687.6 830.3,689.3 827.2,688.3 824.3,686.8 821.8,684.1 819.6,681.0 818.8,676.5 818.6,672.1 818.6,667.9 820.3,664.8 820.9,661.8 820.9,658.6 821.2,655.2 821.3,650.6 822.3,648.8 823.6,645.3 824.0,642.8 824.2,638.6 824.7,634.5 825.6,630.5 825.7,627.6 826.2,623.6 826.0,619.8 824.0,618.0 819.3,615.3 817.5,612.8 816.2,610.2 814.5,606.6 812.8,603.7 810.7,601.5 810.4,599.7 811.8,597.8 812.4,596.4 810.9,596.1 811.1,594.4 812.1,591.9 813.6,591.3 814.4,589.4 815.9,587.4 815.8,585.2 815.4,583.0 814.8,582.3 815.2,580.9 815.9,580.6Z M918.3,537.9 917.0,537.2 915.5,535.9 913.2,536.3 912.5,533.2 913.3,530.8 913.6,528.8 912.8,525.3 914.3,524.4 917.5,524.0 921.0,524.2 923.4,524.4 924.3,522.2 924.3,519.6 923.4,518.1 922.4,516.5 919.9,515.4 919.2,514.1 921.7,513.5 923.7,513.7 923.3,511.3 925.6,512.2 926.3,511.3 928.1,510.4 928.7,508.4 930.3,507.7 931.8,506.4 932.7,504.0 934.5,502.8 936.7,502.4 938.5,501.6 938.2,499.2 937.5,497.4 937.7,494.9 938.2,493.6 941.1,492.0 940.6,494.4 941.5,495.4 940.6,497.2 940.1,499.2 940.6,500.4 941.9,501.4 943.4,500.9 944.9,500.2 946.3,501.6 948.0,500.9 950.2,499.9 952.5,500.2 953.9,500.4 955.2,498.9 955.9,496.9 956.0,494.4 956.7,492.3 959.0,493.9 960.6,493.6 960.7,490.4 959.4,489.3 960.1,487.4 963.0,487.1 965.8,486.8 968.0,485.7 966.5,484.3 963.7,484.8 959.4,485.7 958.6,486.3 956.6,484.3 956.6,481.3 956.2,477.4 958.0,474.2 960.8,470.9 962.0,467.5 957.7,468.2 956.2,470.9 954.9,474.2 951.5,478.0 950.5,481.9 950.9,484.3 952.6,486.3 951.5,488.5 949.9,489.9 949.5,493.1 948.6,496.2 946.8,496.2 946.2,497.9 944.5,497.9 944.1,495.7 942.8,492.0 941.9,489.0 940.9,487.7 939.9,488.5 938.5,489.9 936.2,491.2 934.0,489.3 933.5,487.7 933.1,484.5 933.1,481.0 934.2,478.6 936.0,476.7 938.5,475.2 940.9,471.9 943.2,468.5 945.2,464.0 947.0,460.3 948.8,457.6 951.3,454.4 953.7,452.4 956.6,450.3 959.8,447.8 962.7,446.9 965.8,448.2 970.1,449.9 972.2,452.8 975.1,454.9 979.3,456.4 982.5,459.1 984.6,463.2 983.6,466.1 980.0,465.0 975.1,464.0 975.5,466.8 977.9,471.2 980.0,472.9 983.3,471.6 983.2,468.5 986.0,466.1 988.6,465.0 988.4,460.7 987.7,457.2 992.1,460.3 994.3,458.8 1000.0,459.5 1002.5,457.6 1007.1,456.0 1009.9,457.2 1012.3,453.2 1014.9,456.0 1020.6,458.4 1021.3,454.4 1020.9,449.9 1021.3,445.1 1024.1,440.0 1027.7,439.1 1029.5,444.2 1029.4,448.2 1031.0,455.6 1029.1,461.4 1027.7,465.0 1032.0,464.0 1031.5,458.4 1031.1,454.0 1030.5,446.4 1032.7,439.6 1036.2,444.2 1040.5,441.9 1041.6,440.5 1043.3,444.2 1044.0,449.5 1045.5,446.0 1040.5,439.1 1040.5,434.6 1049.0,432.6 1049.7,427.8 1057.6,424.4 1063.2,421.5 1069.6,416.6 1074.3,411.5 1077.5,416.0 1084.6,419.1 1087.4,423.3 1086.0,432.1 1081.0,434.1 1077.5,435.6 1078.9,438.1 1083.9,434.6 1091.0,435.6 1094.5,438.1 1102.4,437.1 1106.6,435.1 1109.5,438.6 1111.6,444.2 1114.4,446.9 1121.6,445.1 1125.1,440.5 1133.6,441.0 1140.0,444.7 1142.2,447.8 1151.4,447.8 1155.0,452.8 1162.1,453.2 1167.8,451.6 1174.2,454.4 1179.9,452.0 1184.1,456.4 1188.4,461.0 1192.7,463.6 1196.5,466.5 1194.1,469.2 1191.4,472.2 1185.6,471.2 1179.9,470.2 1180.3,474.5 1180.9,478.6 1172.8,481.3 1168.5,484.8 1162.8,486.0 1158.2,487.9 1158.2,491.7 1157.8,496.2 1156.4,500.2 1151.7,504.0 1148.9,508.4 1148.2,505.0 1147.6,498.9 1149.0,492.0 1146.4,487.9 1150.7,485.7 1153.6,482.2 1160.0,478.3 1155.0,478.6 1151.4,483.7 1145.0,487.1 1140.8,487.4 1135.1,487.7 1129.7,487.4 1122.3,495.2 1121.6,499.9 1124.4,501.2 1127.1,503.3 1126.0,508.4 1125.5,513.9 1123.0,519.2 1118.0,524.7 1115.2,525.9 1112.0,526.3 1110.5,529.9 1107.3,532.3 1109.9,535.4 1109.8,539.5 1107.0,540.3 1105.6,540.7 1105.9,538.4 1106.1,536.3 1105.3,534.9 1103.8,533.4 1102.8,531.2 1099.9,531.2 1098.8,532.7 1099.8,529.5 1098.1,529.0 1096.0,530.8 1093.8,532.5 1093.5,534.0 1095.1,535.4 1096.4,535.9 1097.8,534.9 1100.4,535.6 1099.5,536.6 1096.0,538.9 1097.0,540.7 1097.8,543.2 1099.4,545.4 1099.4,546.6 1098.8,547.9 1099.4,549.1 1098.1,551.5 1096.8,553.4 1096.1,555.5 1094.1,557.0 1091.7,558.9 1089.6,559.8 1087.8,560.6 1085.3,561.2 1083.0,562.0 1082.9,563.5 1081.7,561.7 1079.6,561.7 1077.8,563.2 1076.3,565.5 1077.5,567.7 1078.9,569.2 1080.7,570.7 1081.4,573.6 1081.3,576.2 1078.7,578.1 1077.2,579.7 1075.0,580.7 1074.6,578.3 1072.5,576.5 1070.8,574.9 1069.1,573.8 1068.1,575.4 1067.1,578.4 1068.5,580.9 1070.1,583.7 1072.8,585.3 1073.1,588.0 1074.2,591.0 1073.2,591.2 1070.8,589.4 1069.1,587.0 1068.4,583.7 1065.8,581.2 1066.2,578.3 1066.2,575.1 1065.1,572.2 1064.7,569.2 1061.5,569.5 1060.3,570.2 1060.3,566.5 1058.3,564.0 1057.1,561.7 1056.1,560.1 1054.7,560.9 1052.6,561.2 1050.4,561.5 1049.0,563.7 1046.9,564.7 1044.8,567.0 1043.0,568.6 1040.9,570.4 1040.2,574.1 1039.5,576.5 1039.6,578.3 1038.4,579.7 1036.2,581.4 1034.8,580.1 1033.8,577.3 1032.4,574.4 1031.0,570.7 1029.8,567.0 1029.5,564.7 1029.5,562.1 1029.1,560.5 1026.8,562.4 1024.1,560.5 1023.4,559.4 1023.0,558.1 1020.9,556.6 1018.4,555.6 1013.6,555.8 1009.9,555.6 1007.5,554.0 1006.4,552.9 1003.5,553.6 1000.0,552.1 998.4,550.0 996.4,548.1 994.3,548.2 994.3,549.4 995.1,551.5 997.1,553.6 997.8,555.5 998.4,556.6 999.1,554.5 999.4,556.3 1000.7,557.5 1003.1,557.5 1004.9,555.8 1006.1,554.2 1006.2,556.6 1009.3,558.4 1011.0,560.1 1009.3,563.2 1008.1,565.5 1006.4,567.1 1003.5,568.5 1000.2,569.5 997.1,571.1 994.3,572.9 990.7,574.4 987.9,574.8 987.4,573.3 986.7,570.7 986.2,567.7 984.3,564.7 981.6,561.7 980.8,559.4 979.0,556.3 977.5,553.9 975.9,551.5 975.6,549.1 974.9,551.5 974.6,552.0 972.9,549.9 972.2,548.4 972.9,550.7 974.2,553.1 976.1,557.0 978.3,560.9 979.0,564.6 980.8,567.7 982.2,570.5 984.3,572.2 987.6,575.1 987.4,576.5 989.3,577.1 990.0,578.1 995.0,577.0 998.8,576.1 999.0,578.1 997.5,580.9 995.7,584.5 994.0,587.3 990.7,590.2 987.9,592.3 985.4,594.4 983.3,596.6 982.5,598.7 981.9,602.7 982.2,605.1 983.3,607.7 983.7,610.9 983.9,614.6 981.8,617.2 979.0,618.7 975.6,621.7 976.2,623.6 976.5,626.6 975.8,629.0 972.6,631.2 972.5,633.7 970.1,637.6 968.0,640.2 965.7,642.8 962.6,644.3 959.4,644.6 954.4,645.9 952.2,645.2 951.5,642.8 951.9,640.2 949.9,636.1 947.6,632.1 946.6,626.6 945.1,623.6 942.8,618.3 943.1,615.3 945.2,611.1 945.6,608.7 944.8,605.6 943.5,601.5 942.8,599.8 939.9,596.6 938.5,593.9 939.4,591.6 939.9,589.7 938.8,587.6 938.1,586.7 934.8,586.9 932.8,584.7 930.8,583.9 928.1,584.2 925.7,585.2 923.0,586.3 921.0,585.6 918.2,585.7 915.2,586.7 912.5,585.6 910.6,584.0 908.4,582.4 907.2,580.9 906.5,579.4 905.0,578.0 903.8,576.1 902.1,575.1 901.1,571.9 902.7,569.2 903.2,567.0 902.7,564.7 901.7,562.7 902.8,560.1 904.0,557.8 905.4,554.5 907.7,551.7 910.2,550.4 912.2,547.6 912.8,544.4 915.2,542.2 916.8,540.7 917.6,538.4 920.3,539.5 923.2,539.5 925.1,538.6 928.1,537.2 930.3,536.6 934.5,536.5 938.1,536.3 939.9,535.8 941.6,536.6 941.6,538.9 940.6,541.0 941.8,542.4 944.8,543.4 947.6,544.2 948.8,546.3 952.0,547.7 953.7,546.9 954.4,544.8 956.6,543.6 958.7,543.7 960.8,544.9 963.0,545.8 966.5,546.4 968.5,546.3 970.1,545.8 971.9,546.1 974.9,545.8 975.6,543.6 976.5,541.5 976.9,538.9 977.5,537.0 975.8,536.8 973.6,537.7 969.4,537.7 966.5,536.8 964.8,534.9 963.7,533.6 963.7,531.8 963.4,530.3 965.1,529.2 967.0,529.0 963.0,529.2 960.1,529.7 958.7,530.8 958.4,529.9 959.0,532.3 960.1,534.5 958.7,535.9 958.0,537.2 956.9,536.6 956.2,534.0 954.9,532.3 953.6,529.9 953.6,527.4 951.9,525.7 949.0,524.2 947.5,522.2 946.3,520.8 945.5,520.0 944.5,519.8 943.5,520.4 943.5,522.4 945.3,524.0 948.5,527.1 949.0,527.3 950.0,528.8 952.2,530.3 952.2,530.8 950.5,530.1 949.6,531.4 950.3,532.9 948.3,534.5 948.9,532.9 948.2,530.8 946.6,529.7 946.2,529.3 944.6,528.2 943.4,527.4 941.8,526.1 940.6,524.2 939.9,523.0 938.7,522.4 937.5,523.2 936.4,523.8 934.8,524.9 933.4,524.5 931.4,524.2 930.6,526.1 929.1,528.2 927.3,529.5 925.6,531.9 926.3,533.2 924.9,535.2 922.9,536.8 919.7,536.8 918.3,537.9Z M921.7,489.6 919.6,490.1 918.9,489.9 917.8,492.5 917.2,495.2 918.2,496.9 918.7,498.2 918.9,499.4 921.0,499.2 921.3,500.9 921.7,502.8 919.5,503.1 919.3,504.3 918.5,506.4 918.9,507.0 921.0,507.3 920.0,508.0 917.9,510.4 920.9,509.8 923.9,509.1 926.4,508.9 928.0,508.2 927.1,507.3 928.1,506.1 928.4,504.3 926.6,503.8 926.1,502.4 925.1,500.2 923.7,497.4 922.3,496.4 922.2,495.2 923.4,492.3 921.0,492.0 921.7,489.6Z M915.6,498.4 918.0,499.9 917.3,502.6 916.9,505.7 913.9,506.8 912.1,507.3 911.5,505.4 911.6,502.6 913.8,500.7 914.2,498.9 915.6,498.4Z M941.4,396.1 949.5,393.7 952.3,398.5 951.6,405.9 948.0,412.8 949.5,418.5 945.2,414.1 943.1,406.6 940.9,399.3 941.4,396.1Z M953.0,391.1 964.4,392.0 960.8,398.5 955.2,398.5 953.0,391.1Z M955.2,405.9 959.4,409.4 958.0,414.1 955.6,410.1 955.2,405.9Z M1004.2,378.2 1014.2,380.2 1019.2,386.8 1014.2,392.0 1007.1,385.9Z M990.7,386.8 997.1,389.4 1000.0,393.7 992.8,392.0Z M1000.0,383.1 1004.2,387.7 1002.8,391.1 998.5,386.8Z M1023.4,416.6 1021.3,419.7 1017.0,423.3 1011.3,427.8 1008.5,433.1 1006.4,438.1 1004.9,442.8 1007.1,447.3 1008.5,449.1 1002.1,448.2 999.7,444.7 1001.4,439.1 1004.9,433.1 1007.8,426.1 1014.9,420.9 1023.4,416.6Z M1009.2,449.9 1012.0,452.4 1009.6,451.2 1009.2,449.9Z M1062.5,383.1 1068.9,386.8 1071.1,392.8 1075.3,395.3 1082.4,400.8 1079.6,407.3 1072.5,403.0 1066.8,398.5 1056.8,392.8 1058.3,387.7Z M1122.3,420.9 1129.4,423.3 1135.1,421.5 1140.0,424.4 1139.3,427.8 1133.6,428.3 1128.0,432.1 1123.0,429.9Z M1179.9,445.1 1181.3,447.8 1185.6,447.3 1183.4,445.1 1179.9,445.1Z M1129.0,500.4 1129.8,502.6 1130.2,508.4 1131.2,512.4 1129.1,513.9 1129.9,518.9 1128.0,519.2 1127.8,516.0 1128.1,510.6 1127.4,506.1 1129.0,500.4Z M1127.8,520.2 1130.1,522.2 1133.4,524.4 1131.5,525.3 1129.7,527.1 1125.3,528.2 1125.1,525.9 1127.0,524.5 1127.8,520.2Z M1127.2,528.0 1128.0,530.8 1127.2,534.0 1126.5,536.3 1126.2,538.9 1124.8,540.1 1122.7,540.5 1120.8,540.5 1119.1,542.4 1118.0,541.2 1115.2,540.8 1112.3,541.5 1113.0,540.5 1115.2,538.9 1118.7,538.8 1120.4,536.6 1121.3,535.4 1124.4,533.6 1125.1,531.2 1125.5,528.6 1127.2,528.0Z M1112.3,541.7 1113.7,543.6 1112.9,545.8 1111.9,546.6 1111.2,545.3 1110.5,543.6 1111.3,542.2 1112.3,541.7Z M1117.3,541.0 1116.9,542.7 1115.2,543.6 1114.4,542.4 1115.9,541.0 1117.3,541.0Z M1098.8,555.8 1098.9,557.8 1097.8,560.9 1097.0,559.7 1097.7,557.0 1098.8,555.8Z M1083.3,563.8 1083.9,565.5 1081.7,566.7 1080.5,564.7 1083.3,563.8Z M1097.8,566.1 1099.8,566.5 1099.5,569.9 1099.5,572.6 1102.5,574.4 1097.5,573.2 1096.4,570.7 1097.1,569.2 1097.8,566.1Z M1104.5,579.0 1105.8,580.9 1105.5,584.2 1104.1,584.6 1102.4,583.0 1099.5,583.2 1100.9,581.6 1102.4,580.7 1104.5,579.0Z M1103.1,575.1 1104.1,577.3 1103.1,578.7 1100.9,579.4 1099.5,578.0 1099.5,576.1 1103.1,575.1Z M1096.0,576.5 1096.1,578.0 1092.8,580.9 1094.2,579.4 1096.0,576.5Z M1092.1,583.0 1093.8,584.5 1095.5,585.9 1093.5,587.3 1093.8,590.2 1095.2,591.6 1093.1,593.7 1091.7,595.8 1091.0,598.0 1088.8,598.7 1086.7,597.6 1083.9,597.3 1082.7,597.1 1082.4,594.7 1081.0,592.3 1081.9,590.4 1084.3,589.0 1086.7,588.4 1088.1,586.6 1090.3,585.6 1092.1,583.0Z M1061.5,585.0 1064.7,585.6 1066.8,587.6 1069.4,590.2 1071.8,591.6 1073.5,593.0 1074.6,595.1 1076.8,597.3 1076.5,601.4 1074.6,600.8 1071.5,598.7 1069.4,595.8 1067.9,593.7 1066.5,590.9 1064.7,589.4 1063.0,587.6 1061.5,585.0Z M1076.8,601.4 1080.0,602.0 1083.2,602.8 1086.3,602.7 1088.7,603.7 1088.8,605.4 1084.6,605.0 1080.3,604.0 1076.0,602.7 1076.8,601.4Z M1089.6,604.4 1091.7,605.4 1095.2,605.7 1098.8,605.1 1101.6,604.7 1104.5,605.9 1101.6,607.7 1096.7,606.6 1092.4,605.9 1089.6,604.4Z M1103.8,591.2 1101.6,592.3 1097.4,591.9 1096.7,593.0 1098.8,594.4 1101.4,594.4 1100.2,596.6 1100.9,599.4 1100.4,600.8 1098.8,598.7 1098.1,597.3 1097.1,600.8 1096.0,600.5 1095.2,598.0 1096.0,594.4 1096.7,591.9 1098.8,591.3 1103.8,591.2Z M1108.0,589.9 1108.8,592.3 1107.3,594.1 1107.3,591.6 1108.0,589.9Z M1107.8,597.1 1112.0,598.0 1108.8,598.6 1107.8,597.1Z M1112.3,594.1 1116.6,594.8 1118.7,597.0 1121.6,595.3 1124.4,596.4 1126.5,596.7 1130.1,598.0 1132.2,599.0 1133.4,600.8 1135.9,602.0 1135.4,603.7 1136.8,604.8 1138.6,606.6 1140.5,608.2 1137.2,607.6 1134.4,605.9 1131.5,604.4 1129.8,605.9 1127.2,606.1 1123.7,605.1 1123.0,603.7 1122.0,600.8 1118.7,599.4 1115.9,598.6 1113.7,597.3 1115.9,596.3 1113.7,595.3 1112.3,594.1Z M1141.5,599.4 1142.2,600.8 1140.0,601.8 1137.9,600.8 1141.5,599.4Z M1149.3,603.0 1152.8,605.1 1156.4,608.0 1153.6,606.6 1149.3,603.0Z M1140.5,596.7 1142.9,598.7 1143.6,599.8 1141.9,598.4Z M1159.2,622.0 1161.4,623.6 1163.5,625.7 1161.8,624.8Z M704.1,563.5 705.8,564.7 704.6,565.6 704.1,564.1Z M701.0,561.4 701.9,562.1 700.9,561.8Z M795.9,592.7 797.7,593.4 796.6,594.4 795.7,593.9Z M674.6,662.2 675.4,663.2 674.4,662.8Z M1180.6,616.4 1179.9,617.2 1178.3,618.7 1179.7,619.3 1180.6,617.8Z M1163.2,614.6 1164.6,616.8 1163.8,615.3Z M1040.1,579.0 1041.6,580.9 1042.5,583.0 1040.6,584.5 1039.5,582.7 1039.6,580.1 1040.1,579.0Z M996.1,610.2 997.1,612.4 997.7,615.3 996.3,618.3 995.0,622.0 993.6,627.4 990.3,630.5 988.6,629.7 987.9,626.6 987.9,624.3 989.0,621.3 988.9,617.5 990.0,616.1 992.1,615.3 994.6,612.4 996.1,610.2Z M1128.7,608.3 1129.4,610.9 1130.4,613.1 1132.6,614.0 1133.1,616.8 1134.4,620.5 1137.6,622.5 1139.3,625.5 1141.0,627.4 1143.2,629.7 1143.7,632.1 1144.5,635.3 1143.6,639.4 1141.9,642.8 1140.5,646.2 1139.2,650.6 1136.5,651.1 1134.1,652.4 1134.1,653.5 1131.5,652.0 1130.1,652.6 1126.2,651.5 1124.8,649.7 1122.4,647.4 1123.0,646.2 1122.3,645.3 1122.0,642.4 1121.6,644.5 1120.6,646.5 1119.1,645.9 1118.3,643.6 1116.6,641.9 1114.4,640.7 1112.3,640.4 1108.8,640.6 1103.8,641.9 1101.6,644.3 1097.4,644.3 1093.5,646.2 1089.8,645.2 1089.6,643.6 1090.6,640.7 1089.6,636.9 1088.4,633.7 1087.4,630.5 1087.4,628.2 1087.8,625.1 1088.8,624.8 1092.4,622.8 1098.1,621.7 1099.8,619.0 1100.9,616.8 1104.1,614.1 1107.3,613.1 1108.8,614.6 1110.5,614.4 1111.6,610.9 1113.7,610.2 1114.2,609.2 1116.6,610.5 1120.6,610.2 1119.4,611.9 1118.7,614.6 1121.6,616.8 1125.8,618.4 1127.0,616.8 1127.4,613.1 1127.7,610.2 1128.7,608.3Z M1131.8,656.7 1136.8,656.7 1136.9,659.3 1134.8,662.0 1132.5,660.5 1131.8,656.7Z M1171.6,645.2 1174.2,647.1 1176.0,649.7 1179.9,650.8 1179.0,653.7 1175.2,658.0 1174.2,655.2 1174.3,653.0 1174.2,649.7 1172.8,647.1 1171.6,645.2Z M1171.6,656.1 1173.9,657.6 1172.5,660.5 1172.0,662.8 1168.8,666.6 1166.4,668.1 1162.8,667.3 1163.5,664.8 1167.5,661.8 1169.9,658.6 1171.6,656.1Z M809.4,559.1 811.5,559.2 814.6,560.5 817.2,561.7 819.6,562.7 820.5,563.8 815.8,564.1 814.6,562.9 812.4,561.5 809.7,561.1 805.3,561.1 806.5,560.1 809.4,559.1Z M822.5,564.1 826.4,564.3 827.6,565.2 828.7,566.2 825.7,566.7 822.9,567.0 820.2,566.2 822.6,565.5 822.5,564.1Z M814.6,566.2 817.5,566.2 816.8,567.1 814.6,566.7 814.6,566.2Z M830.4,566.2 832.7,566.4 832.3,567.0 830.4,567.0 830.4,566.2Z M813.9,553.4 816.5,553.9 815.5,556.3 815.4,557.8 817.6,555.5 813.9,553.4Z M840.0,678.0 843.8,678.3 842.8,679.9 840.0,680.3 840.0,678.0Z M872.0,684.6 874.8,685.8 875.1,686.6 872.7,685.3 872.0,684.6Z M943.8,534.0 948.2,534.1 947.5,536.8 943.8,535.4 943.8,534.0Z M939.1,528.6 939.9,530.8 938.8,532.7 937.9,532.5 937.7,529.2 939.1,528.6Z M939.4,525.1 939.1,528.2 938.4,527.6 938.2,525.9 939.4,525.1Z M959.6,538.9 963.4,539.3 963.0,539.8 960.8,539.6 959.6,538.9Z M975.1,538.8 974.1,540.5 971.9,540.0 973.6,539.3 975.1,538.8Z M943.5,496.2 943.6,497.9 942.4,498.9 941.6,497.2 943.5,496.2Z M952.9,491.5 952.0,493.9 951.7,492.5 952.9,491.5Z M790.3,384.3 804.0,371.7 814.3,364.3 829.1,364.9 837.1,368.3 839.4,374.0 831.4,384.3 824.6,394.6 820.0,402.6 817.7,409.4 814.3,414.0 804.0,413.4 798.3,412.3 793.7,406.0 789.1,393.4Z M775.4,400.3 782.3,402.6 785.7,409.4 781.1,411.7 777.7,407.1Z M785.7,403.7 791.4,406.0 792.6,411.7 788.0,412.9 785.1,408.3Z M763.5,405.0 769.5,406.5 770.5,412.0 765.0,413.5 762.5,409.0Z M751.4,420.9 759.4,413.4 766.3,417.4 774.3,422.0 777.7,427.7 772.0,430.0 765.1,430.0 757.1,424.3Z M777.7,418.6 788.0,416.3 790.3,428.9 782.3,427.7Z M793.7,416.3 799.4,414.0 813.1,416.3 814.3,424.3 812.0,430.0 794.9,430.0 790.3,423.1Z M746.9,441.4 749.1,431.1 754.9,430.0 760.6,433.4 757.1,441.4 753.7,447.1Z M757.1,436.9 766.3,436.9 772.0,440.3 774.3,435.7 778.9,441.4 778.9,452.9 769.7,459.7 759.4,457.4 757.1,449.4Z M780.0,435.7 788.0,433.4 789.1,444.9 784.6,444.9 781.1,441.4Z M790.3,434.6 796.0,432.3 797.1,441.4 793.7,443.7 790.3,440.3Z"/><path id="water" d="M967.2,528.6 970.8,527.8 975.1,527.1 977.2,527.6 980.8,529.0 983.6,528.8 985.2,527.8 984.7,525.5 982.6,524.2 980.0,522.2 978.2,520.8 976.5,520.2 975.8,521.4 973.8,522.4 972.2,520.6 972.9,519.2 970.4,517.9 968.7,519.6 968.2,521.2 966.7,523.6 965.7,525.1 965.8,527.1 967.2,528.6Z M976.3,520.6 975.8,518.9 979.3,517.7 981.5,516.7 980.0,518.3 978.9,520.2 976.3,520.6Z M999.0,517.1 995.7,517.9 993.6,520.2 993.4,523.2 994.0,526.1 996.1,529.0 997.5,530.3 995.7,532.7 995.7,535.4 999.2,537.0 1002.1,536.5 1002.8,535.4 1001.7,531.8 1001.4,529.9 1000.7,528.0 999.2,525.5 997.5,522.2 1001.4,521.2 1001.4,517.9 999.0,517.1Z M753.2,464.0 755.3,468.5 750.4,470.2 748.2,466.8 753.2,464.0Z M769.6,477.4 766.0,481.3 761.0,482.8 761.7,480.1 766.0,477.7 769.6,477.4Z M800.1,513.0 798.7,515.0 795.2,517.5 797.3,517.9 801.6,518.3 805.1,517.7 805.1,515.8 803.0,514.1 800.1,513.0Z M804.4,519.2 804.4,521.6 803.4,524.7 802.0,527.8 800.8,526.5 801.6,522.2 802.3,519.8 804.4,519.2Z M806.5,519.2 811.5,520.2 812.2,522.2 809.4,524.7 807.7,523.2 806.8,520.6 806.5,519.2Z M813.6,525.3 810.1,527.1 807.5,528.0 809.4,527.8 812.2,526.7 813.6,525.3Z M812.5,524.5 816.5,524.5 817.5,522.8 813.6,523.8 812.5,524.5Z"/><path id="bord" d="M750.6,512.8 790.6,512.8 790.7,512.0 793.2,513.7 798.6,515.0 M817.2,524.0 818.2,522.2 819.8,521.2 824.3,521.2 825.0,520.6 826.4,518.1 827.6,516.2 829.0,516.5 829.6,519.4 830.6,521.0 M725.5,453.2 725.5,484.8 728.3,485.7 730.4,487.7 733.3,486.3 736.1,490.7 741.1,496.4 740.3,499.7 M759.5,544.1 762.9,543.7 768.1,546.1 772.1,546.1 774.5,545.3 777.4,549.1 779.5,549.9 781.6,548.6 784.5,552.3 787.8,554.8 M794.9,572.2 794.9,569.9 796.6,569.9 796.6,567.3 799.3,567.3 800.4,566.2 M799.3,567.3 799.1,570.1 798.9,572.3 797.9,573.2 M800.6,570.4 798.9,572.3 801.1,573.8 M801.7,574.4 803.4,573.2 805.8,571.7 807.7,571.4 M804.1,577.1 807.0,577.4 M808.1,581.4 808.5,579.3 M815.2,582.7 815.9,580.7 M823.2,576.1 821.8,578.7 822.9,580.9 823.6,583.0 826.3,583.0 830.0,584.2 829.6,587.3 830.9,591.3 M813.8,591.3 815.8,592.3 818.9,593.0 819.0,594.4 817.9,595.8 815.8,597.3 813.6,600.1 812.9,599.4 811.8,597.8 M818.9,593.0 823.6,596.6 826.4,599.0 827.2,595.1 826.7,591.3 830.9,591.3 832.8,592.0 835.0,590.2 835.7,587.3 839.2,586.6 839.0,583.7 840.8,580.9 M839.2,586.6 841.0,589.4 842.8,590.9 844.9,590.2 848.5,589.9 852.6,588.0 M844.9,590.2 844.8,584.6 M848.5,589.9 849.2,584.9 M826.4,599.0 820.9,603.7 822.9,606.6 825.7,608.7 827.2,608.7 828.3,610.9 827.4,614.6 827.2,618.3 825.9,619.6 M827.2,608.7 832.8,607.3 835.0,610.9 839.2,613.1 840.7,616.5 843.5,618.7 843.5,621.3 837.8,622.8 836.8,625.5 833.6,625.1 830.7,626.3 M827.2,618.3 828.6,621.3 829.0,624.3 830.7,626.3 828.6,629.0 828.2,633.7 826.4,637.8 826.3,642.8 825.6,647.9 824.3,654.2 823.9,658.9 824.0,666.8 822.9,672.1 821.8,676.5 823.6,679.9 828.6,680.3 M828.4,681.3 828.4,686.8 M836.8,625.5 840.7,629.0 843.8,631.0 846.4,633.4 848.2,632.9 848.3,630.7 848.8,628.2 846.8,625.9 843.8,625.1 843.5,621.3 M848.3,630.7 849.6,632.1 849.2,633.7 844.1,637.9 846.6,639.4 849.9,641.9 850.1,644.0 M844.1,637.9 842.9,644.5 M913.3,527.3 914.3,526.9 916.6,527.4 916.2,529.0 916.0,530.8 915.6,532.7 916.2,534.1 915.5,535.9 M923.4,524.4 926.0,525.7 930.6,526.1 M929.6,508.2 932.0,510.2 934.2,511.7 937.7,512.6 936.8,515.8 934.5,518.7 936.0,519.4 938.1,518.1 938.8,519.2 940.8,518.1 940.9,517.1 939.7,516.0 936.8,515.8 M935.7,518.7 935.8,521.2 936.7,523.6 M930.8,507.5 933.1,507.7 934.4,508.9 934.5,506.6 936.0,505.0 936.2,503.1 M934.4,508.9 934.7,510.4 935.1,511.7 M938.2,499.2 940.1,499.4 M946.3,501.6 946.8,505.0 947.3,508.4 943.2,510.0 944.5,512.8 945.6,513.7 944.5,516.0 940.9,516.0 939.7,516.0 M947.3,508.4 949.5,510.0 952.3,510.6 953.7,511.7 958.0,512.8 M945.6,513.7 947.3,512.8 949.5,513.3 950.5,513.7 950.5,515.0 M950.5,515.0 952.7,515.4 955.2,514.3 957.4,513.9 M950.5,515.0 949.0,517.1 948.8,517.9 946.6,518.1 943.8,517.9 940.9,517.1 M945.5,518.1 945.5,520.0 M945.3,520.2 948.2,519.4 949.3,518.1 952.7,519.6 954.9,518.7 958.6,514.8 M948.5,520.8 953.0,520.8 953.7,524.2 952.3,526.1 M956.4,521.6 958.3,522.8 958.7,525.1 957.9,526.7 M953.7,524.2 954.4,526.1 955.2,527.1 955.3,528.8 954.7,531.6 M955.3,528.8 958.0,528.4 960.8,528.4 963.4,527.6 965.8,527.1 M958.3,522.8 961.6,523.8 965.1,523.2 966.7,523.8 M963.4,527.6 963.0,529.3 M958.6,514.8 961.6,515.0 964.0,514.3 965.8,516.0 966.1,518.1 966.1,520.2 968.1,520.8 M964.0,514.3 965.1,514.1 968.0,516.0 968.7,518.3 M957.4,513.9 958.0,512.8 960.1,509.5 959.6,507.3 960.0,504.5 959.4,501.6 958.4,500.4 953.9,500.4 M958.4,500.4 957.3,498.7 956.3,498.2 M959.4,501.6 962.3,500.2 963.8,497.4 960.1,495.4 956.0,496.4 M963.8,497.4 966.1,495.2 965.1,492.5 960.6,491.5 M965.1,492.5 965.8,487.4 M959.6,507.3 969.4,507.3 971.2,505.9 972.2,501.9 969.9,496.9 966.1,497.4 M971.2,505.9 974.4,505.4 976.5,509.5 980.0,510.6 982.6,515.0 980.3,516.9 M965.5,484.3 969.4,479.8 968.4,473.5 968.0,466.8 966.5,457.6 967.2,455.2 969.8,452.4 M960.4,467.5 959.4,461.4 955.2,456.4 955.9,455.6 964.4,452.4 967.2,455.2 M955.2,456.4 951.6,458.0 946.6,468.5 943.4,475.2 943.8,481.3 942.4,488.5 M982.9,524.4 988.6,525.1 992.8,527.4 995.1,527.3 M985.2,527.8 987.7,528.6 990.0,529.0 992.8,527.4 M987.7,528.6 988.2,530.8 989.7,531.4 988.9,532.7 989.4,535.9 M989.7,531.4 992.1,532.9 994.3,531.8 995.5,533.8 M977.5,536.6 980.0,536.5 984.3,536.3 986.4,535.9 989.4,535.9 991.4,538.9 991.4,542.4 993.6,544.9 995.0,548.2 M986.2,536.3 984.3,540.7 981.2,542.6 981.8,544.4 978.6,545.8 977.5,549.5 975.8,549.1 M977.1,542.7 977.2,544.4 981.2,542.6 M981.8,544.4 985.7,546.6 989.6,549.7 992.1,549.7 994.3,548.2 M992.1,549.7 995.0,550.7 M986.9,569.4 988.6,567.9 992.8,568.5 1000.0,565.5 1004.9,560.1 1000.0,557.8 M1000.0,565.5 1001.5,569.1 M1004.9,560.1 1005.4,557.5 1005.9,555.3 M974.6,546.1 975.6,549.1 M996.0,517.7 992.1,513.9 993.6,509.5 998.2,508.0 1003.5,508.9 1009.2,508.4 1013.5,509.5 1012.8,505.0 1013.5,501.4 1022.7,498.9 1027.0,500.2 1030.5,502.6 1034.8,501.4 1039.8,508.4 1044.8,510.6 1050.2,512.6 M1050.2,512.6 1044.0,517.1 1043.3,520.6 1040.1,525.5 1032.0,525.3 1027.3,526.1 1023.0,528.6 1020.7,528.6 1016.3,525.7 1009.3,524.0 1005.6,521.2 1005.4,528.4 M1050.2,512.6 1053.3,515.0 1055.4,518.1 1059.0,521.2 1061.8,522.6 1063.2,526.1 1070.4,525.7 1075.3,528.0 1081.7,526.1 1085.3,524.2 1088.8,521.2 1095.2,518.1 1096.2,515.6 1091.8,510.9 M1050.2,512.6 1054.0,509.5 1060.4,510.6 1066.1,506.1 1072.5,510.0 1077.5,510.0 1080.3,511.7 1088.1,511.7 1091.8,510.9 M1091.8,510.9 1098.1,503.1 1103.8,502.6 1107.3,510.6 1112.3,515.0 1118.0,514.1 1115.4,521.2 1112.3,525.5 1111.7,526.3 M1111.7,526.3 1108.0,527.1 1104.5,529.9 1102.8,531.2 M1105.9,534.9 1108.5,533.4 M1040.1,525.5 1035.5,529.0 1031.0,531.8 1032.7,536.3 1036.6,538.9 1038.4,544.1 1041.2,547.4 1048.3,551.5 1052.3,551.5 1056.8,553.1 1063.2,551.5 1066.1,555.5 1066.1,558.6 1068.2,560.9 1071.1,561.7 1073.2,560.1 1076.8,559.7 1079.6,561.5 M1036.6,538.9 1032.0,543.6 1032.0,546.6 1028.4,549.9 1027.0,557.0 1023.0,558.3 M1032.7,536.3 1027.7,537.2 1027.0,541.5 1024.8,545.8 1020.6,549.1 1012.6,548.6 1015.6,553.9 1013.6,555.9 M1012.6,548.6 1012.8,540.7 1013.0,538.8 M1013.0,538.8 1017.7,538.9 1020.6,535.9 1024.1,535.4 1027.7,535.9 1032.7,536.3 M1013.0,538.8 1011.3,536.8 1007.1,534.5 1002.8,535.4 M1020.6,535.9 1017.7,532.7 1012.0,528.0 1007.1,528.4 1003.5,526.5 M1020.6,535.9 1022.0,531.8 1026.3,529.0 1029.8,530.3 1031.0,531.8 M1041.2,547.4 1039.8,550.7 1045.5,553.9 1051.3,553.9 1052.3,551.5 M1052.3,553.1 1056.8,553.4 M1051.9,553.9 1051.9,556.3 1052.6,560.9 M1057.3,557.0 1057.6,560.1 1057.3,562.4 M1063.2,551.5 1061.1,553.9 1059.7,557.0 1059.0,560.1 1057.7,562.4 M1068.4,563.5 1065.1,566.2 1066.4,569.2 1067.1,575.8 1066.2,578.7 M1068.4,563.5 1071.8,567.0 1075.0,567.3 1076.2,570.7 1075.6,572.4 M1071.4,560.1 1073.9,563.2 1076.0,567.0 1078.9,569.9 1078.9,572.2 1076.8,576.5 1074.6,578.0 M1075.6,572.4 1072.5,572.2 1071.8,573.6 1072.2,575.8 M1068.5,583.7 1071.1,584.2 M1093.5,586.9 1089.6,590.2 1086.0,591.6 1082.2,590.9 M1126.5,596.7 1126.5,606.0 M922.9,539.6 924.3,544.1 921.0,545.8 913.9,549.1 913.6,552.0 913.6,554.7 908.9,556.3 907.5,562.0 901.8,562.0 M913.6,552.0 907.5,552.0 M913.6,552.6 919.2,556.3 927.7,561.7 932.1,564.7 936.0,562.4 943.1,558.6 940.2,554.7 939.5,547.9 942.4,544.9 942.4,542.9 M938.1,536.3 937.1,541.5 938.9,544.9 939.5,547.9 M961.7,545.6 961.6,560.9 978.5,560.9 M961.6,560.9 960.1,564.0 960.1,564.7 947.3,558.6 943.1,558.6 M960.1,564.7 958.7,570.7 957.3,574.4 958.4,578.7 959.4,580.1 965.1,585.9 969.8,588.0 973.6,586.6 976.5,585.9 M978.5,560.9 980.8,567.0 977.9,572.2 977.5,575.1 974.4,580.1 976.5,585.9 M980.8,567.0 983.6,571.4 987.4,575.1 M986.4,575.1 985.7,577.3 994.3,581.6 991.4,586.6 985.0,587.3 982.2,588.0 976.9,586.6 976.5,585.9 M994.3,581.6 995.5,576.5 M985.0,594.4 985.0,587.3 M973.6,586.6 975.1,588.0 974.4,594.4 979.8,599.4 981.8,599.7 M974.4,594.4 968.7,594.4 967.2,596.6 968.0,599.4 969.4,605.1 973.6,608.0 975.1,609.5 983.5,608.0 M969.8,588.0 968.4,591.6 968.0,594.4 M965.1,585.9 953.0,585.9 948.8,589.4 945.2,598.7 943.4,600.8 M968.0,599.4 966.5,605.1 968.4,610.9 965.8,611.6 960.1,609.5 957.3,604.4 950.9,603.0 943.4,600.8 M957.3,604.4 957.3,611.6 959.4,618.3 954.4,618.3 942.8,618.1 M965.8,611.6 968.7,615.3 962.3,618.3 959.4,618.3 M968.7,615.3 972.9,616.8 970.5,625.5 967.2,625.1 962.3,618.3 M970.5,625.5 971.5,630.5 972.8,632.6 M967.2,625.1 963.0,629.0 962.3,630.5 954.4,625.1 954.4,618.3 M954.4,625.1 954.4,635.3 949.5,635.5 M965.1,635.3 967.2,638.6 965.8,636.9 965.1,635.3 M945.2,598.7 946.2,595.1 944.9,589.9 942.1,589.9 939.9,591.6 M944.9,589.9 948.8,589.9 M942.1,589.9 939.9,590.2 M957.3,574.4 956.6,578.0 952.7,580.9 948.0,582.3 947.3,578.7 946.6,575.1 945.2,573.6 947.3,558.6 M948.0,582.3 946.6,585.9 948.8,589.9 M945.2,573.6 940.2,574.4 935.2,573.6 931.0,575.8 930.0,579.4 929.8,583.9 M946.6,575.1 945.2,578.0 942.8,583.7 938.5,586.6 M931.7,573.6 931.7,571.4 932.1,564.7 M931.7,571.4 926.3,572.2 924.6,571.4 921.7,572.9 918.5,577.3 914.6,578.0 909.8,575.8 908.6,571.7 902.8,569.1 M926.3,572.2 926.7,577.3 921.7,577.3 M926.7,577.3 928.3,584.2 M921.7,577.3 922.2,579.4 921.7,585.9 M921.7,577.3 918.2,578.0 914.6,580.9 913.9,582.3 915.3,586.7 M914.6,578.0 911.1,580.9 910.1,582.3 M909.8,575.1 906.5,575.1 902.5,575.8 M908.6,571.7 906.5,575.1 M919.2,556.3 918.2,569.9 911.8,570.7 908.6,571.7"/><path id="ant" d="M655.0,773.0 659.0,773.3 673.7,775.7 678.6,777.8 693.3,780.1 700.6,770.8 709.6,770.0 715.3,761.8 725.9,758.6 735.7,754.5 744.7,752.9 746.3,748.8 750.4,751.2 765.1,752.9 771.7,759.4 774.1,756.1 780.6,757.8 779.0,743.9 788.0,742.2 791.2,744.7 801.0,746.3 809.2,751.2 815.7,745.5 822.3,747.1 818.2,739.0 820.6,730.8 828.8,722.7 835.3,714.5 845.1,709.6 839.4,718.6 839.4,739.0 838.6,756.9 851.7,766.7 855.0,770.8 863.2,775.7 874.6,777.3 886.8,764.3 890.1,752.9 894.2,752.9 899.1,745.5 908.9,740.6 913.8,735.7 925.2,733.3 946.4,732.1 960.3,734.9 973.4,729.2 980.7,733.3 984.0,728.4 995.4,721.8 1001.9,719.1 1007.7,722.7 1024.5,725.1 1031.8,732.4 1037.6,726.7 1049.0,719.9 1054.7,721.0 1062.0,716.1 1071.8,716.1 1081.6,721.0 1085.7,718.6 1093.9,721.8 1106.1,719.4 1109.4,721.8 1114.3,719.4 1130.6,721.8 1137.1,727.6 1143.7,728.4 1156.7,735.7 1168.2,740.6 1166.5,748.8 1160.0,756.9 1158.4,768.4 1161.6,774.9 1163.3,770.8 1176.3,773.3 1186.1,776.5 1194.3,779.0 1199.0,780.0 1199.0,860.0 655.0,860.0Z"/></defs>
<rect x="659" y="233" width="535" height="721" fill="#dddddd"/>
<g clip-path="url(#mc)">
<rect x="659" y="337.0" width="535" height="512.0" fill="#aad3df"/>
<use href="#land" transform="translate(-512,0)" fill="none" stroke="#75b0c4" stroke-width="1.9" stroke-linejoin="round"/>
<use href="#land" transform="translate(0,0)" fill="none" stroke="#75b0c4" stroke-width="1.9" stroke-linejoin="round"/>
<use href="#land" transform="translate(512,0)" fill="none" stroke="#75b0c4" stroke-width="1.9" stroke-linejoin="round"/>
<use href="#ant" fill="none" stroke="#75b0c4" stroke-width="1.9" stroke-linejoin="round"/>
<use href="#land" transform="translate(-512,0)" fill="#f2efe9"/>
<use href="#land" transform="translate(0,0)" fill="#f2efe9"/>
<use href="#land" transform="translate(512,0)" fill="#f2efe9"/>
<use href="#ant" fill="#f2efe9"/>
<use href="#water" transform="translate(-512,0)" fill="#aad3df" stroke="#75b0c4" stroke-width="0.8"/>
<use href="#bord" transform="translate(-512,0)" fill="none" stroke="#c99bd0" stroke-width="0.5"/>
<use href="#water" transform="translate(0,0)" fill="#aad3df" stroke="#75b0c4" stroke-width="0.8"/>
<use href="#bord" transform="translate(0,0)" fill="none" stroke="#c99bd0" stroke-width="0.5"/>
<use href="#water" transform="translate(512,0)" fill="#aad3df" stroke="#75b0c4" stroke-width="0.8"/>
<use href="#bord" transform="translate(512,0)" fill="none" stroke="#c99bd0" stroke-width="0.5"/>
<rect x="659" y="849.0" width="535" height="200" fill="#dddddd"/>
</g>
<rect x="659" y="233" width="1" height="721" fill="#fff" fill-opacity="0.35"/>
<rect x="660" y="953" width="534" height="1" fill="#fff" fill-opacity="0.35"/>
<rect x="670" y="244" width="32" height="62" rx="4" fill="#fff" stroke="#b3b3b3" stroke-width="2"/>
<rect x="671" y="274" width="30" height="1" fill="#cccccc"/>
<rect x="680" y="259" width="12.5" height="2.2" fill="#000"/><rect x="685.2" y="253.6" width="2.2" height="12.6" fill="#000"/>
<rect x="680.5" y="288.6" width="12.5" height="2.4" fill="#000"/>
<rect x="1137" y="244" width="46" height="46" rx="4" fill="#fff" stroke="#b3b3b3" stroke-width="2"/>
<g transform="translate(1160,268)"><path d="M-13,4 L0,12.5 L13,4 L0,-4.5 Z" fill="#c8c8c8" stroke="#555" stroke-width="0.5" stroke-opacity="0.6"/><path d="M-13,0 L0,8.5 L13,0 L0,-8.5 Z" fill="#d6d6d6" stroke="#555" stroke-width="0.5" stroke-opacity="0.6"/><path d="M-13,-4 L0,4.5 L13,-4 L0,-12.5 Z" fill="#ececec" stroke="#555" stroke-width="0.5" stroke-opacity="0.6"/><path d="M-9,-4 L0,1.8 L9,-4 L0,-9.8 Z" fill="#dddddd"/></g>
<rect x="1053" y="938" width="141" height="15.5" fill="#f1f1f1"/>
</svg>
<div class="t" style="left:1057.5px;top:860.6px;font-size:10.9px;color:#0078a8">Leaflet<span style="color:#333"> | © </span>OpenStreetMap</div>
</div>
</body></html>
